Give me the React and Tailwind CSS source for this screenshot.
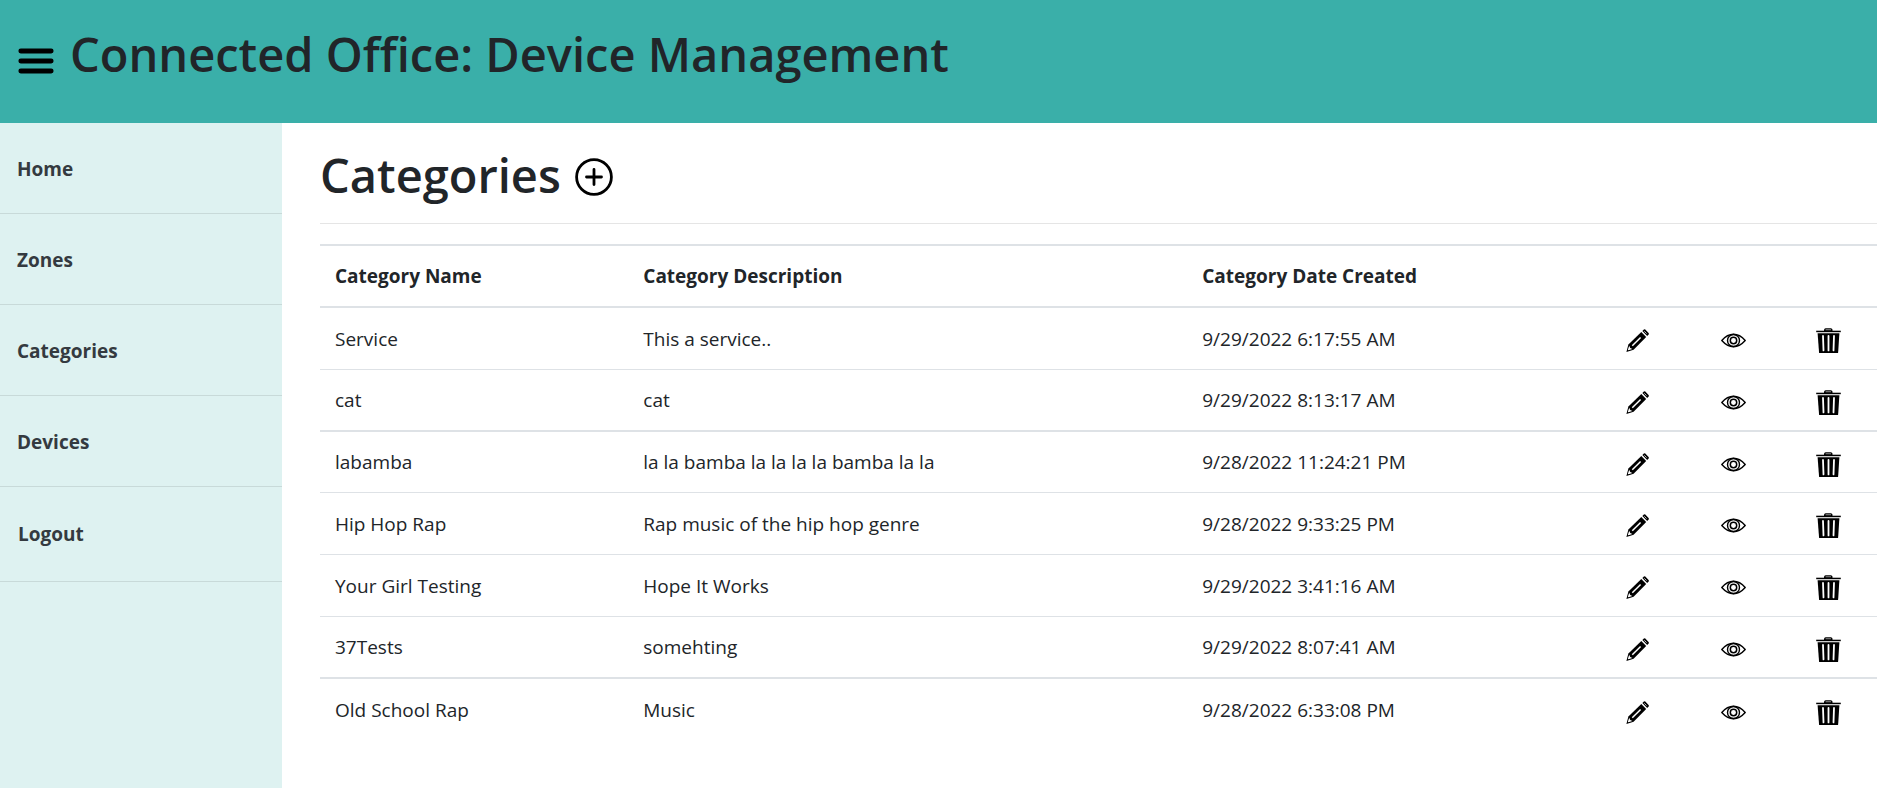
const links = ['Home', 'Zones', 'Categories', 'Devices'];

const rows = [
  ['Service', 'This a service..', '9/29/2022 6:17:55 AM'],
  ['cat', 'cat', '9/29/2022 8:13:17 AM'],
  ['labamba', 'la la bamba la la la la bamba la la', '9/28/2022 11:24:21 PM'],
  ['Hip Hop Rap', 'Rap music of the hip hop genre', '9/28/2022 9:33:25 PM'],
  ['Your Girl Testing', 'Hope It Works', '9/29/2022 3:41:16 AM'],
  ['37Tests', 'somehting', '9/29/2022 8:07:41 AM'],
  ['Old School Rap', 'Music', '9/28/2022 6:33:08 PM'],
];

// Width of the rule under each row.
const rules = ['border-b', 'border-b-2', 'border-b', 'border-b', 'border-b', 'border-b-2', 'border-b-0'];

function MenuIcon() {
  return (
    <svg viewBox="0 0 36 26" className="h-[26px] w-9" stroke="#000" strokeWidth="4.8" strokeLinecap="round" aria-hidden="true">
      <path d="M2.8 3H33.2M2.8 13H33.2M2.8 23H33.2" />
    </svg>
  );
}

function AddIcon() {
  return (
    <svg viewBox="0 0 38 38" className="size-[38px]" fill="none" stroke="#000" strokeWidth="2.8" strokeLinecap="round" aria-hidden="true">
      <circle cx="19" cy="19" r="17.4" />
      <path d="M19 11.5V26.5M11.5 19H26.5" />
    </svg>
  );
}

function PencilIcon() {
  return (
    <svg viewBox="0 0 25 25" className="size-[25px]" aria-hidden="true">
      <path d="M0.4 24L2.4 16.4L15.3 3.9L20.2 8.9L7.6 21.7Z" fill="#000" />
      <path d="M16.4 2.9L17.9 1.5Q18.6 0.9 19.3 1.6L22.6 5Q23.2 5.7 22.6 6.4L21.2 7.9Z" fill="#000" />
      <path d="M3.2 17.8L4.2 19.9L6.4 20.9L2.4 22.2L1.9 21.7Z" fill="#fff" />
      <path d="M6.3 17.7L14.6 9.5" stroke="#fff" strokeWidth="1.5" />
      <path d="M18.3 3.3L20.6 5.6" stroke="#fff" strokeWidth="0.7" />
    </svg>
  );
}

function EyeIcon() {
  return (
    <svg viewBox="0 0 25 25" className="size-[25px]" fill="none" stroke="#000" strokeWidth="1.4" aria-hidden="true">
      <path d="M0.8 12.5C4.5 8.3 8.2 6.3 12.5 6.3S20.5 8.3 24.2 12.5C20.5 16.7 16.8 18.7 12.5 18.7S4.5 16.7 0.8 12.5Z" strokeLinejoin="round" />
      <circle cx="12.5" cy="12.5" r="6" />
      <circle cx="12.5" cy="12.5" r="3.2" strokeWidth="1.5" />
    </svg>
  );
}

function TrashIcon() {
  return (
    <svg viewBox="0 0 25 25" className="size-[25px]" aria-hidden="true">
      <path d="M8 3V1.8Q8.2 0.3 9.6 0.3H14.9Q16.3 0.3 16.5 1.8V3Z" fill="#000" />
      <path d="M9.6 1.8H15" stroke="#999" strokeWidth="1" />
      <path d="M0.2 2.7H24.8V4.2H0.2Z" fill="#000" />
      <path d="M1.6 5.2H23.4L22.1 25H3.1Z" fill="#000" />
      <path d="M7 8L7.5 22.4M12.5 8V22.4M18 8L17.5 22.4" stroke="#fff" strokeWidth="1.8" strokeLinecap="round" />
    </svg>
  );
}

const actions = [
  ['Edit', PencilIcon],
  ['View', EyeIcon],
  ['Delete', TrashIcon],
];

export default function App() {
  return (
    <div className="flex min-h-screen flex-col bg-white font-['Open_Sans',sans-serif] text-[19px] leading-[30px] text-[#212529]">
      <header className="flex items-center gap-4 bg-[#3aafa9] px-[18px] pt-6 pb-[39px]">
        <button type="button" aria-label="Toggle menu" className="pt-[14px]">
          <MenuIcon />
        </button>
        <h1 className="text-[47px] leading-[60px] font-semibold">Connected Office: Device Management</h1>
      </header>

      <div className="flex grow">
        <nav className="w-[282px] shrink-0 bg-[#def2f1] font-bold text-[#343a40]">
          {links.map((label) => (
            <a key={label} href="#" className="block border-b border-[#c8dad9] px-[17px] pt-[31px] pb-[29px]">
              {label}
            </a>
          ))}
          <button type="button" className="block w-full border-b border-[#c8dad9] px-[18px] pt-8 pb-8 text-left">
            Logout
          </button>
        </nav>

        <main className="min-w-0 grow pl-[38px]">
          <div className="flex items-center gap-[14px] pt-[22px] pb-[18px]">
            <h2 className="text-[47px] leading-[60px] font-semibold">Categories</h2>
            <button type="button" aria-label="Add category" className="pt-1">
              <AddIcon />
            </button>
          </div>
          <hr className="mb-5 border-t border-[#e5e5e5]" />

          <table className="w-full table-fixed border-separate border-spacing-0">
            <colgroup>
              <col className="w-[19.8%]" />
              <col className="w-[35.9%]" />
              <col className="w-[27.2%]" />
              <col className="w-[6.1%]" />
              <col className="w-[6.1%]" />
              <col className="w-[4.9%]" />
            </colgroup>
            <thead>
              <tr className="h-16 text-left *:border-y-2 *:border-[#dee2e6] *:px-[15px] *:font-bold">
                <th scope="col">Category Name</th>
                <th scope="col">Category Description</th>
                <th scope="col">Category Date Created</th>
                <td />
                <td />
                <td />
              </tr>
            </thead>
            <tbody>
              {rows.map((row, i) => (
                <tr key={row[0]} className={i === 2 ? 'h-[61px]' : 'h-[62px]'}>
                  {row.map((text, j) => (
                    <td key={j} className={`${rules[i]} border-[#dee2e6] px-[15px]`}>
                      {text}
                    </td>
                  ))}
                  {actions.map(([label, Icon]) => (
                    <td key={label} className={`${rules[i]} border-[#dee2e6] pt-1 pl-[15px]`}>
                      <button type="button" aria-label={`${label} ${row[0]}`} className="block">
                        <Icon />
                      </button>
                    </td>
                  ))}
                </tr>
              ))}
            </tbody>
          </table>
        </main>
      </div>
    </div>
  );
}
